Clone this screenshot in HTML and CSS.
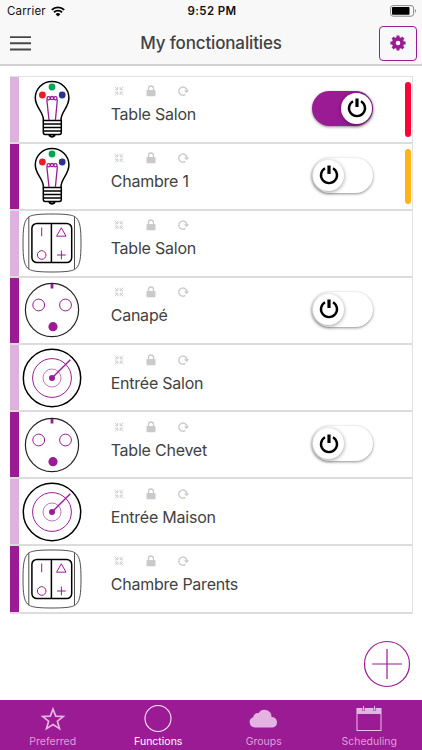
FILE: index.html
```html
<!DOCTYPE html>
<html lang="en">
<head>
  <meta charset="UTF-8">
  <meta name="viewport" content="width=device-width, initial-scale=1.0">
  <title>My fonctionalities</title>
  <link rel="stylesheet" href="styles.css">
</head>
<body>
  <!-- shared icons -->
  <svg class="sprite" xmlns="http://www.w3.org/2000/svg">
    <symbol id="bulb" viewBox="0 0 60 60">
      <g fill="none" stroke="#000" stroke-width="1.5">
        <path d="M21.5 41.5C21.5 32 13.3 29 13.3 18.8C13.3 9.5 20.8 2.6 30 2.6S46.9 9.5 46.9 18.8C46.9 29 38.9 32 38.9 41.5"/>
        <path d="M21.3 41.4H39.3V53.6Q39.3 55.4 37.5 55.4H23.1Q21.3 55.4 21.3 53.6ZM21.3 45H39.3M21.3 48.6H39.3M21.3 52.1H39.3"/>
        <path d="M27 56Q30 59.6 33 56" stroke-width="2"/>
      </g>
      <g fill="none" stroke="#9b1b95" stroke-width="1.3">
        <path d="M27 41L24.8 20.5M33.4 41L35.4 20.5"/>
        <circle cx="26.6" cy="19.3" r="1.6"/><circle cx="30" cy="19.1" r="1.6"/><circle cx="33.4" cy="19.3" r="1.6"/>
      </g>
      <circle cx="20.4" cy="16" r="3.4" fill="#ed1c24"/>
      <circle cx="30" cy="8" r="3.4" fill="#00a651"/>
      <circle cx="40.2" cy="16" r="3.4" fill="#2e3192"/>
    </symbol>
    <symbol id="rocker" viewBox="0 0 60 60">
      <g fill="none" stroke="#222" stroke-width="0.8">
        <path d="M30 1C48 1 52 2.5 54.5 5C58 9 59 15 59 30S58 51 54.5 55C52 57.5 48 59 30 59S8 57.5 5.5 55C2 51 1 45 1 30S2 9 5.5 5C8 2.5 12 1 30 1Z"/>
        <path d="M6.8 4V56M52.5 4V56"/>
      </g>
      <g fill="none" stroke="#000" stroke-width="1.5">
        <rect x="9.9" y="10.4" width="39.8" height="39.2" rx="5"/>
        <path d="M29.4 10.4V49.6"/>
      </g>
      <path d="M19.7 14.5V23.3M39.3 14.8L44 23.2H34.6ZM35 42H43.8M39.4 37.6V46.4" fill="none" stroke="#9b1b95"/>
      <circle cx="19.7" cy="42" r="4.3" fill="none" stroke="#9b1b95"/>
    </symbol>
    <symbol id="socket" viewBox="0 0 60 60">
      <circle cx="30" cy="30" r="26.6" fill="none" stroke="#222" stroke-width="1.2"/>
      <path d="M30 4V8.5" stroke="#9b1b95" stroke-width="2.8"/>
      <circle cx="16.7" cy="25" r="5.9" fill="none" stroke="#9b1b95"/>
      <circle cx="43.5" cy="25" r="5.9" fill="none" stroke="#9b1b95"/>
      <circle cx="31" cy="46.7" r="4.6" fill="#9b1b95"/>
    </symbol>
    <symbol id="target" viewBox="0 0 60 60">
      <circle cx="30" cy="30" r="28.7" fill="none" stroke="#000" stroke-width="1.5"/>
      <circle cx="30" cy="30" r="19.4" fill="none" stroke="#9b1b95"/>
      <circle cx="30" cy="30" r="9" fill="none" stroke="#9b1b95" stroke-width="0.6"/>
      <circle cx="30" cy="30" r="3" fill="#9b1b95"/>
      <path d="M30 30L48.3 11.7" stroke="#9b1b95" stroke-width="1.4"/>
    </symbol>
    <symbol id="shrink" viewBox="0 0 10 10">
      <path d="M.6.6L3.6 3.6M3.8 .8V3.8H.8M9.4.6L6.4 3.6M6.2 .8V3.8H9.2M.6 9.4L3.6 6.4M3.8 9.2V6.2H.8M9.400 9.400L6.400 6.400M6.200 9.200V6.200H9.200" fill="none" stroke="#cfcfcf"/>
    </symbol>
    <symbol id="lock" viewBox="0 0 10 12">
      <rect x="0.5" y="5" width="9" height="6.3" rx="0.8" fill="#cacaca"/>
      <path d="M2.500 5.500V3.500A2.500 2.500 0 0 1 7.500 3.500V5.500" fill="none" stroke="#cacaca" stroke-width="1.300"/>
    </symbol>
    <symbol id="reload" viewBox="0 0 11 10">
      <path d="M7.400 8.400A4.100 4.100 0 1 1 9 5" fill="none" stroke="#cdcdcd" stroke-width="1.400"/>
      <path d="M6 4.300H11L8.700 7.200Z" fill="#cacaca"/>
    </symbol>
    <symbol id="power" viewBox="0 0 20 20">
      <path d="M6 3.2A8 8 0 1 0 14 3.2" fill="none" stroke="#000" stroke-width="2.4"/>
      <path d="M10 .5V9" stroke="#000" stroke-width="3.2"/>
    </symbol>
  </svg>

  <div class="app">
    <header class="header">
      <div class="status">
        <div class="carrier">
          <span>Carrier</span>
          <svg width="14" height="11" viewBox="0 0 14 11">
            <path d="M.8 3.9A8.8 8.8 0 0 1 13.2 3.9M3 6.3A5.7 5.7 0 0 1 11 6.3" fill="none" stroke="#000" stroke-width="1.9"/>
            <path d="M4.6 8.2A3.4 3.4 0 0 1 9.4 8.2L7 10.6Z"/>
          </svg>
        </div>
        <span class="time">9:52 PM</span>
        <svg class="battery" width="27" height="12" viewBox="0 0 27 12">
          <rect x="0.6" y="0.6" width="23" height="10.6" rx="2.5" fill="none" stroke="#888"/>
          <rect x="2" y="2" width="17.5" height="7.8" rx="0.8"/>
          <path d="M25 4Q27 6 25 8Z" fill="#888"/>
        </svg>
      </div>
      <div class="toolbar">
        <svg class="menu" width="21" height="15" viewBox="0 0 21 15">
          <path d="M0 1.1H21M0 7.3H21M0 13.5H21" stroke="#484848" stroke-width="1.9"/>
        </svg>
        <h1 class="title">My fonctionalities</h1>
        <button class="settings">
          <svg width="16" height="16" viewBox="0 0 16 16">
            <circle cx="8" cy="8" r="4.2" fill="none" stroke="#9b1b95" stroke-width="3.8"/>
            <path d="M8 .4V3M8 13V15.6M.4 8H3M13 8H15.6M2.6 2.6L4.5 4.5M11.5 11.5L13.4 13.4M13.4 2.6L11.5 4.5M4.5 11.5L2.6 13.4" stroke="#9b1b95" stroke-width="3"/>
          </svg>
        </button>
      </div>
    </header>

    <main class="content">
      <ul class="list">
        <li class="row">
          <svg class="device"><use href="#bulb"/></svg>
          <div class="info">
            <div class="flags"><svg class="shrink"><use href="#shrink"/></svg><svg class="lock"><use href="#lock"/></svg><svg class="reload"><use href="#reload"/></svg></div>
            <span class="name">Table Salon</span>
          </div>
          <div class="toggle on"><span class="knob"><svg class="power"><use href="#power"/></svg></span></div>
          <span class="level red"></span>
        </li>
        <li class="row">
          <svg class="device"><use href="#bulb"/></svg>
          <div class="info">
            <div class="flags"><svg class="shrink"><use href="#shrink"/></svg><svg class="lock"><use href="#lock"/></svg><svg class="reload"><use href="#reload"/></svg></div>
            <span class="name">Chambre 1</span>
          </div>
          <div class="toggle"><span class="knob"><svg class="power"><use href="#power"/></svg></span></div>
          <span class="level yellow"></span>
        </li>
        <li class="row">
          <svg class="device"><use href="#rocker"/></svg>
          <div class="info">
            <div class="flags"><svg class="shrink"><use href="#shrink"/></svg><svg class="lock"><use href="#lock"/></svg><svg class="reload"><use href="#reload"/></svg></div>
            <span class="name">Table Salon</span>
          </div>
        </li>
        <li class="row">
          <svg class="device"><use href="#socket"/></svg>
          <div class="info">
            <div class="flags"><svg class="shrink"><use href="#shrink"/></svg><svg class="lock"><use href="#lock"/></svg><svg class="reload"><use href="#reload"/></svg></div>
            <span class="name">Canapé</span>
          </div>
          <div class="toggle"><span class="knob"><svg class="power"><use href="#power"/></svg></span></div>
        </li>
        <li class="row">
          <svg class="device"><use href="#target"/></svg>
          <div class="info">
            <div class="flags"><svg class="shrink"><use href="#shrink"/></svg><svg class="lock"><use href="#lock"/></svg><svg class="reload"><use href="#reload"/></svg></div>
            <span class="name">Entrée Salon</span>
          </div>
        </li>
        <li class="row">
          <svg class="device"><use href="#socket"/></svg>
          <div class="info">
            <div class="flags"><svg class="shrink"><use href="#shrink"/></svg><svg class="lock"><use href="#lock"/></svg><svg class="reload"><use href="#reload"/></svg></div>
            <span class="name">Table Chevet</span>
          </div>
          <div class="toggle"><span class="knob"><svg class="power"><use href="#power"/></svg></span></div>
        </li>
        <li class="row">
          <svg class="device"><use href="#target"/></svg>
          <div class="info">
            <div class="flags"><svg class="shrink"><use href="#shrink"/></svg><svg class="lock"><use href="#lock"/></svg><svg class="reload"><use href="#reload"/></svg></div>
            <span class="name">Entrée Maison</span>
          </div>
        </li>
        <li class="row">
          <svg class="device"><use href="#rocker"/></svg>
          <div class="info">
            <div class="flags"><svg class="shrink"><use href="#shrink"/></svg><svg class="lock"><use href="#lock"/></svg><svg class="reload"><use href="#reload"/></svg></div>
            <span class="name">Chambre Parents</span>
          </div>
        </li>
      </ul>
      <button class="add">
        <svg width="48" height="48" viewBox="0 0 48 48" fill="none" stroke="#9b1b95">
          <circle cx="24" cy="24" r="22.5" stroke-width="1.2"/>
          <path d="M9 24H39M24 9V39" stroke-width="1.2"/>
        </svg>
      </button>
    </main>

    <nav class="tabs">
      <a class="tab">
        <svg width="30" height="30" viewBox="0 0 30 30">
          <path d="M15 5.1L17.7 12.1L25.3 12.5L19.4 17.2L21.5 24.6L15 20.5L8.5 24.6L10.6 17.2L4.7 12.5L12.3 12.1Z" fill="none" stroke="#e5b5e3" stroke-width="1.7"/>
        </svg>
        <span>Preferred</span>
      </a>
      <a class="tab active">
        <svg width="30" height="30" viewBox="0 0 30 30">
          <circle cx="15" cy="14.5" r="13" fill="none" stroke="#fbe8fa" stroke-width="1.1"/>
        </svg>
        <span>Functions</span>
      </a>
      <a class="tab">
        <svg width="30" height="30" viewBox="0 0 30 30">
          <path d="M6 23.5A5.3 5.3 0 0 1 4.2 13.2A4.5 4.5 0 0 1 9.5 9.2A7 7 0 0 1 22.5 12.9A5.4 5.4 0 0 1 24 23.5Z" fill="#e3b3e1"/>
        </svg>
        <span>Groups</span>
      </a>
      <a class="tab">
        <svg width="30" height="30" viewBox="0 0 30 30">
          <path d="M3 4.5H27V10H3Z" fill="#e3b3e1"/>
          <rect x="3" y="4.5" width="24" height="22" fill="none" stroke="#e9bfe7"/>
          <path d="M9.5 4V7M20.5 4V7" stroke="#9b1b95" stroke-width="2"/>
          <path d="M9.5 2V6.5M20.5 2V6.5" stroke="#e9bfe7"/>
        </svg>
        <span>Scheduling</span>
      </a>
    </nav>
  </div>
</body>
</html>
```
FILE: styles.css
```css
* {
  box-sizing: border-box;
}
body {
  margin: 0;
  font-family: Inter, "Liberation Sans", sans-serif;
  color: #424242;
  background: #fff;
}
svg {
  display: block;
  flex: none;
}
.sprite {
  position: absolute;
  width: 0;
  height: 0;
}
.app {
  display: flex;
  flex-direction: column;
  height: 750px;
  overflow: hidden;
}
.header {
  height: 66px;
  background: #f8f8f8;
  border-bottom: 2px solid #d2d2d2;
}
.status {
  display: grid;
  grid-template-columns: 1fr auto 1fr;
  align-items: center;
  height: 22px;
  padding: 0 5px 0 7px;
  font-size: 11.5px;
  color: #111;
}
.carrier {
  display: flex;
  align-items: center;
  gap: 5px;
  letter-spacing: 0.15px;
}
.time {
  font-weight: 600;
  letter-spacing: 0.35px;
}
.battery {
  justify-self: end;
}
.toolbar {
  display: grid;
  grid-template-columns: 1fr auto 1fr;
  align-items: center;
  height: 42px;
  padding: 0 5px;
}
.menu {
  margin-left: 5px;
}
.title {
  margin: 0;
  font-size: 17px;
  font-weight: 450;
  letter-spacing: -0.15px;
}
.settings {
  display: flex;
  justify-content: center;
  align-items: center;
  justify-self: end;
  width: 38px;
  height: 35px;
  padding: 0;
  border: 1px solid #9b1b95;
  border-radius: 4px;
  background: transparent;
}
.content {
  flex: 1;
  padding: 9.5px 9.5px 0 10px;
}
.list {
  margin: 0;
  padding: 0;
  list-style: none;
  border: solid #e2e2e2;
  border-width: 1.5px 1.5px 0 0;
}
.row {
  display: flex;
  align-items: center;
  height: 67.15px;
  border-bottom: 2px solid #dcdcdc;
}
.row::before {
  content: "";
  align-self: stretch;
  width: 9px;
  margin-right: 2.7px;
  background: #ddb3dc;
}
.row:nth-child(even)::before {
  background: #9b1b95;
}
.device {
  width: 60px;
  height: 60px;
}
.info {
  width: 201px;
  padding-left: 29px;
  margin-bottom: 9px;
}
.flags {
  display: flex;
  align-items: center;
  height: 12px;
  padding-left: 3.5px;
  margin-bottom: 7px;
}
.shrink {
  width: 10px;
  height: 10px;
  margin-right: 22px;
}
.lock {
  width: 10px;
  height: 12px;
  margin-right: 22px;
}
.reload {
  width: 11px;
  height: 10px;
}
.name {
  display: block;
  font-size: 16px;
  line-height: 20px;
  letter-spacing: -0.23px;
  white-space: nowrap;
}
.toggle {
  display: flex;
  align-items: center;
  width: 61px;
  height: 35px;
  margin: 0 0 2px 29.5px;
  padding: 1px;
  border-radius: 18px;
  background: #fff;
  box-shadow: 0 1px 3px rgba(0, 0, 0, 0.45);
}
.toggle.on {
  justify-content: flex-end;
  background: #9b1b95;
}
.knob {
  display: flex;
  justify-content: center;
  align-items: center;
  width: 31px;
  height: 31px;
  border-radius: 50%;
  background: #fff;
  box-shadow: 0 1px 4px rgba(0, 0, 0, 0.4);
}
.power {
  width: 20px;
  height: 20px;
}
.level {
  width: 6px;
  height: 55px;
  margin: 0 0.8px 0 auto;
  border-radius: 3px;
}
.red {
  background: #ff0039;
}
.yellow {
  background: #fcb514;
}
.add {
  display: block;
  margin: 26px 1.5px 0 auto;
  padding: 0;
  border: 0;
  background: none;
}
.tabs {
  display: flex;
  height: 50px;
  background: #9b1b95;
}
.tab {
  display: flex;
  flex: 1;
  flex-direction: column;
  align-items: center;
  gap: 1px;
  padding-top: 4px;
  font-size: 10.5px;
  line-height: 14px;
  color: #dc9fda;
}
.active {
  color: #fff;
}
```
